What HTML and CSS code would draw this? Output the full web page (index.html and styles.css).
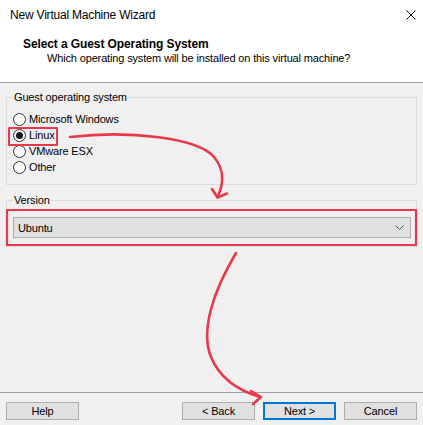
FILE: index.html
```html
<!DOCTYPE html>
<html lang="en">
<head>
<meta charset="utf-8">
<title>New Virtual Machine Wizard</title>
<link rel="stylesheet" href="styles.css">
</head>
<body>
<div class="window">
  <div class="titlebar">
    <span class="title">New Virtual Machine Wizard</span>
    <svg class="close" width="10" height="10" viewBox="0 0 10 10">
      <path d="M0.5 0.5 L9.5 9.5 M9.5 0.5 L0.5 9.5" stroke="#000" stroke-width="1" fill="none"/>
    </svg>
  </div>

  <div class="header">
    <div class="heading">Select a Guest Operating System</div>
    <div class="subheading">Which operating system will be installed on this virtual machine?</div>
  </div>

  <div class="content">
    <fieldset class="group os-group">
      <legend>Guest operating system</legend>
      <label class="radio"><span class="radio-box"></span>Microsoft Windows</label>
      <label class="radio checked"><span class="radio-box"></span>Linux</label>
      <label class="radio"><span class="radio-box"></span>VMware ESX</label>
      <label class="radio"><span class="radio-box"></span>Other</label>
    </fieldset>

    <fieldset class="group version-group">
      <legend>Version</legend>
      <div class="combo">
        <span>Ubuntu</span>
        <svg width="9" height="5" viewBox="0 0 9 5">
          <polyline points="0.5,0.5 4.5,4.5 8.5,0.5" fill="none" stroke="#555" stroke-width="1"/>
        </svg>
      </div>
    </fieldset>
  </div>

  <div class="footer">
    <button class="btn">Help</button>
    <div class="nav">
      <button class="btn">&lt; Back</button>
      <button class="btn default">Next &gt;</button>
      <button class="btn">Cancel</button>
    </div>
  </div>

  <!-- red callouts drawn on top of the dialog -->
  <svg class="annotations" width="423" height="425" viewBox="0 0 423 425">
    <g fill="none" stroke="#e8384a" stroke-linecap="round" stroke-linejoin="round">
      <rect x="9" y="128" width="48" height="17" stroke-width="2"/>
      <rect x="7" y="210" width="409" height="35" stroke-width="2.2"/>
      <path d="M70 137 C 130 130 198 138 214 157 C 225 170 223 185 218 196" stroke-width="2.6"/>
      <path d="M212 189 L217.5 197.5 L227 193.5" stroke-width="2.6"/>
      <path d="M236 253 C 214 290 200 330 211 357 C 221 381 243 392 260 397" stroke-width="2.6"/>
      <path d="M251 391 L261 397 L253 404" stroke-width="2.6"/>
    </g>
  </svg>
</div>
</body>
</html>
```

FILE: styles.css
```css
html, body {
  margin: 0;
  padding: 0;
}

body {
  font-family: "Liberation Sans", Arial, sans-serif;
  font-size: 11px;
  letter-spacing: -0.15px;
  color: #000;
  background: #f0f0f0;
}

.window {
  position: relative;
  width: 423px;
  height: 425px;
  background: #f0f0f0;
  display: flex;
  flex-direction: column;
  overflow: hidden;
}

/* title bar */
.titlebar {
  height: 29px;
  background: #fff;
  display: flex;
  align-items: center;
  justify-content: space-between;
  padding: 0 7px 0 10px;
  font-size: 12px;
  letter-spacing: -0.2px;
}

/* wizard page header */
.header {
  background: #fff;
  padding: 8px 0 17px 23px;
  border-bottom: 1px solid #a0a0a0;
}

.heading {
  font-weight: bold;
  font-size: 12px;
  letter-spacing: -0.1px;
  line-height: 14px;
}

.subheading {
  padding-left: 24px;
  line-height: 14px;
}

.content {
  flex: 1;
  display: flex;
  flex-direction: column;
}

/* group boxes */
.group {
  margin: 7px 6px 0;
  border: 1px solid #dcdcdc;
  padding: 6px 6px 9px;
  min-width: 0;
}

.group legend {
  padding: 0 1px;
  line-height: 15px;
}

.version-group {
  margin-top: 8px;
  padding: 9px 5px 8px 6px;
}

/* radio buttons */
.radio {
  display: flex;
  align-items: center;
  gap: 3px;
  height: 16px;
}

.radio-box {
  width: 13px;
  height: 13px;
  box-sizing: border-box;
  border: 1px solid #333;
  border-radius: 50%;
  background: #fff;
  display: flex;
  align-items: center;
  justify-content: center;
}

.radio.checked .radio-box::after {
  content: "";
  width: 7px;
  height: 7px;
  border-radius: 50%;
  background: #1a1a1a;
}

/* drop-down list */
.combo {
  height: 21px;
  box-sizing: border-box;
  border: 1px solid #adadad;
  background: #e1e1e1;
  display: flex;
  align-items: center;
  justify-content: space-between;
  padding: 0 6px 0 4px;
}

/* button row */
.footer {
  border-top: 1px solid #a0a0a0;
  padding: 9px 6px 5px;
  display: flex;
  justify-content: space-between;
}

.nav {
  display: flex;
  gap: 8px;
}

.btn {
  width: 73px;
  height: 18px;
  box-sizing: border-box;
  padding: 0;
  border: 1px solid #adadad;
  background: #e1e1e1;
  font-family: inherit;
  font-size: 11px;
  letter-spacing: -0.15px;
  color: #000;
}

.btn.default {
  border: 2px solid #0078d7;
}

.annotations {
  position: absolute;
  left: 0;
  top: 0;
  pointer-events: none;
}
```
